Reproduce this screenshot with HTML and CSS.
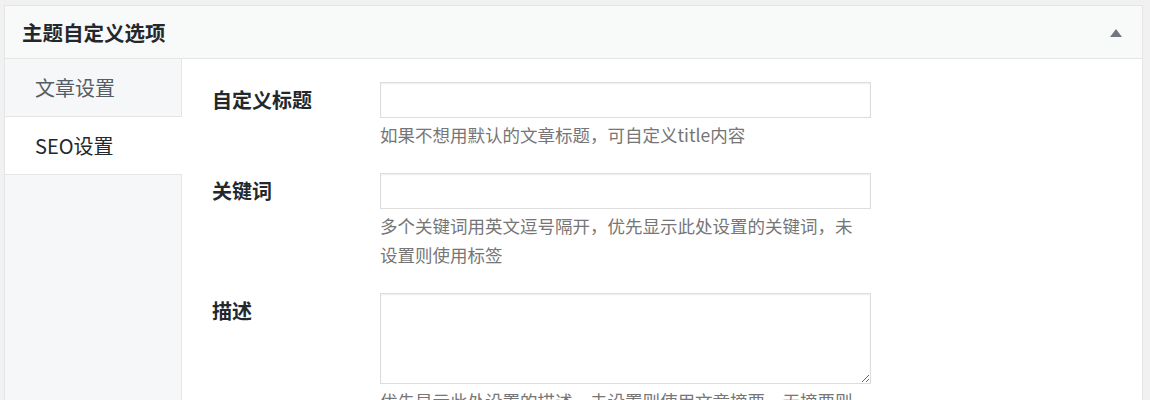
FILE: index.html
```html
<!DOCTYPE html>
<html>
<head>
  <meta charset="utf-8">
  <title>主题自定义选项</title>
  <link rel="stylesheet" href="styles.css">
</head>
<body>

  <div class="postbox">
    <div class="postbox-header">
      <h2>主题自定义选项</h2>
      <span class="toggle-arrow"></span>
    </div>

    <div class="inside">
      <ul class="tabs">
        <li>文章设置</li>
        <li class="active">SEO设置</li>
      </ul>

      <div class="tab-panel">
        <div class="field">
          <label for="seo-title">自定义标题</label>
          <div class="control">
            <input type="text" id="seo-title">
            <p class="hint">如果不想用默认的文章标题，可自定义title内容</p>
          </div>
        </div>

        <div class="field">
          <label for="seo-keywords">关键词</label>
          <div class="control">
            <input type="text" id="seo-keywords">
            <p class="hint">多个关键词用英文逗号隔开，优先显示此处设置的关键词，未设置则使用标签</p>
          </div>
        </div>

        <div class="field">
          <label for="seo-desc">描述</label>
          <div class="control">
            <textarea id="seo-desc"></textarea>
            <p class="hint">优先显示此处设置的描述，未设置则使用文章摘要，无摘要则截取文章内容</p>
          </div>
        </div>
      </div>
    </div>
  </div>

</body>
</html>
```

FILE: styles.css
```css
body {
  margin: 0;
  background-color: #f1f1f1;
  font-family: "Noto Sans CJK SC", "Liberation Sans", sans-serif;
  color: #23282d;
}

.postbox {
  margin: 5px 7px 0 4px;
  background-color: #fff;
  border: 1px solid #e5e5e5;
  min-height: 420px;
}

.postbox-header {
  display: flex;
  justify-content: space-between;
  align-items: center;
  height: 52px;
  padding: 0 20px 0 17px;
  background-color: #f8f9f9;
  border-bottom: 1px solid #e5e5e5;
}

.postbox-header h2 {
  margin: 0;
  font-size: 20.5px;
  font-weight: bold;
  line-height: 28px;
}

.toggle-arrow {
  width: 0;
  height: 0;
  margin-top: 1px;
  border-left: 6px solid transparent;
  border-right: 6px solid transparent;
  border-bottom: 8px solid #72777c;
}

.inside {
  display: flex;
  min-height: 360px;
}

.tabs {
  list-style: none;
  margin: 0;
  padding: 0;
  width: 176px;
  background-color: #f6f7f8;
  border-right: 1px solid #e5e5e5;
}

.tabs li {
  height: 57px;
  line-height: 57px;
  padding-left: 30px;
  font-size: 20px;
  color: #555d66;
  border-bottom: 1px solid #e5e5e5;
}

.tabs li.active {
  margin-right: -1px;
  background-color: #fff;
  color: #23282d;
}

.tab-panel {
  flex: 1;
  display: flex;
  flex-direction: column;
  gap: 24px;
  padding: 23px 0 0 30px;
}

.field {
  display: flex;
}

.field label {
  width: 168px;
  font-size: 20px;
  font-weight: bold;
  line-height: 36px;
}

.control {
  width: 491px;
}

.control input,
.control textarea {
  display: block;
  width: 100%;
  box-sizing: border-box;
  margin: 0;
  border: 1px solid #ddd;
  box-shadow: inset 0 1px 2px rgba(0, 0, 0, 0.07);
  background-color: #fff;
}

.control input {
  height: 36px;
}

.control textarea {
  height: 91px;
  resize: vertical;
}

.hint {
  width: 482px;
  margin: 2px 0 0;
  font-size: 17.5px;
  line-height: 29px;
  color: #767676;
}
```
